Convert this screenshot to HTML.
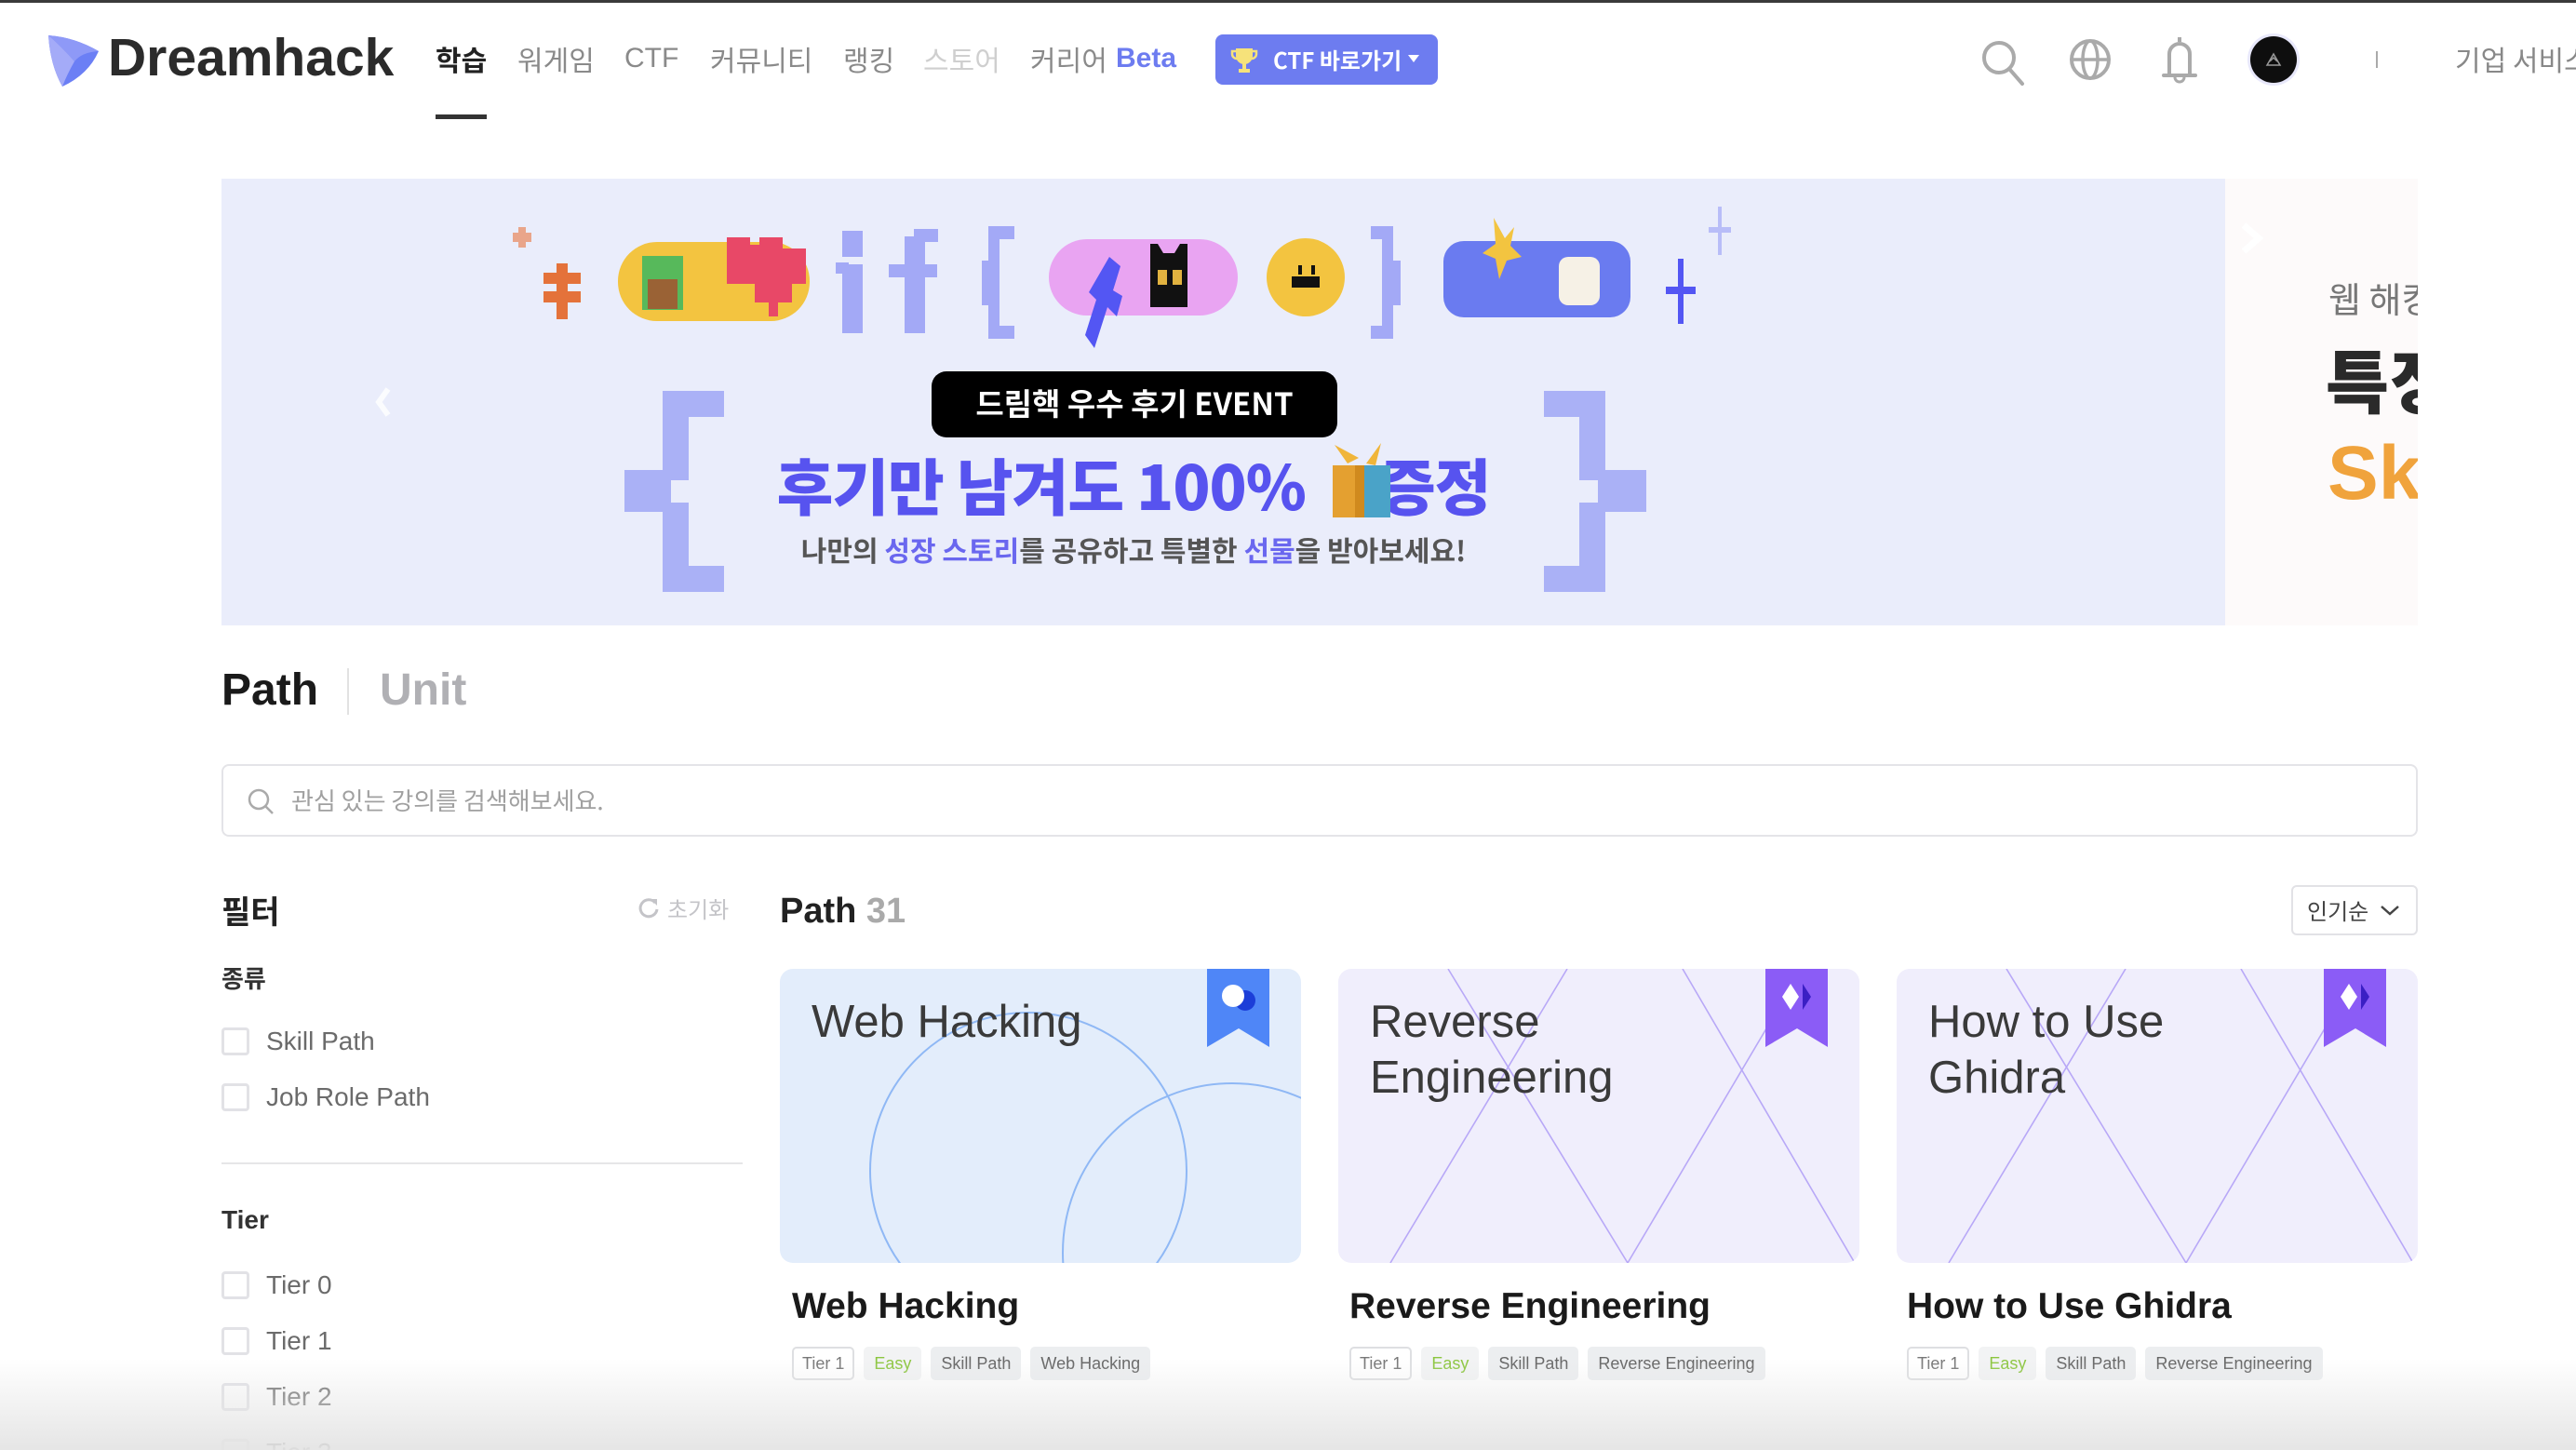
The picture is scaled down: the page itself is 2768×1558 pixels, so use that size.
<!DOCTYPE html>
<html><head><meta charset="utf-8">
<style>
*{margin:0;padding:0;box-sizing:border-box}
html,body{width:2768px;height:1558px;overflow:hidden;background:#fff}
body{position:relative;font-family:"Liberation Sans","Noto Sans CJK KR",sans-serif;color:#222}
.a{position:absolute;white-space:nowrap}
.kr{font-family:"Noto Sans CJK KR","Liberation Sans",sans-serif}
.nav{top:40px;font-size:30px;color:#8a8a8a;line-height:46px}
.cb{position:absolute;left:238px;width:30px;height:30px;border:3px solid #e2e2e6;border-radius:4px}
.cl{position:absolute;left:286px;font-size:28px;color:#6b6b6b;line-height:36px}
.card{position:absolute;top:1041px;width:560px;height:316px;border-radius:14px;overflow:hidden}
.ct{position:absolute;left:34px;top:27px;font-size:49px;color:#3a3a3a;line-height:60px}
.tt{position:absolute;top:1382px;font-size:39px;font-weight:bold;color:#1a1a1a}
.tags{position:absolute;top:1447px;display:flex;gap:10px}
.tag{height:36px;line-height:32px;padding:0 9px;font-size:18px;border-radius:5px;background:#eceef0;color:#666;border:2px solid #eceef0}
.tag.w{background:#fff;border-color:#dedfe2;color:#777}
.tag.g{background:#f2f3f4;border-color:#f2f3f4;color:#8cc63f}
</style></head><body>
<div class="a" style="left:0;top:0;width:2768px;height:3px;background:#3a3a3a"></div>

<svg class="a" style="left:44px;top:32px" width="72" height="66" viewBox="44 32 72 66">
<path d="M52 38 Q80 40 106 55 Q95 80 67 93 Q54 70 52 38Z" fill="#6b7ff5"/>
<path d="M52 38 Q80 40 106 55 Q88 56 80 66 Q66 50 52 38Z" fill="#8e99f7"/>
<path d="M52 38 Q66 50 80 66 Q72 80 67 93 Q54 70 52 38Z" fill="#a4abf8"/>
</svg>
<div class="a" style="left:116px;top:29px;font-size:57px;font-weight:bold;color:#2b2b2b;line-height:66px">Dreamhack</div>

<div class="a nav kr" style="left:468px;color:#222;font-weight:bold">학습</div>
<div class="a nav kr" style="left:556px">워게임</div>
<div class="a nav" style="left:671px">CTF</div>
<div class="a nav kr" style="left:763px">커뮤니티</div>
<div class="a nav kr" style="left:906px">랭킹</div>
<div class="a nav kr" style="left:992px;color:#cfcfcf">스토어</div>
<div class="a nav kr" style="left:1107px">커리어</div>
<div class="a nav" style="left:1199px;color:#6d7cf0;font-weight:bold">Beta</div>
<div class="a" style="left:468px;top:123px;width:55px;height:5px;background:#333"></div>

<div class="a kr" style="left:1306px;top:37px;width:239px;height:54px;border-radius:8px;background:#6d7cf0;color:#fff;font-size:24px;font-weight:bold;line-height:54px;padding-left:62px">CTF 바로가기</div>
<svg class="a" style="left:1322px;top:49px" width="30" height="32" viewBox="0 0 30 32"><path d="M6 3h18v8a9 9 0 0 1-18 0z" fill="#f6e27a"/><path d="M6 6H2v3a5 5 0 0 0 5 5M24 6h4v3a5 5 0 0 1-5 5" stroke="#f6e27a" stroke-width="2.5" fill="none"/><rect x="13" y="19" width="4" height="6" fill="#f6e27a"/><rect x="9" y="25" width="12" height="4" fill="#f6e27a"/></svg>
<svg class="a" style="left:1512px;top:58px" width="14" height="10"><path d="M1 1h12L7 9z" fill="#fff"/></svg>

<svg class="a" style="left:2120px;top:36px" width="360" height="60" viewBox="2120 36 360 60">
<circle cx="2148" cy="62" r="16" stroke="#aaa" stroke-width="4" fill="none"/><path d="M2159 74L2173 90" stroke="#aaa" stroke-width="4" stroke-linecap="round"/>
<circle cx="2246" cy="64" r="20" stroke="#aaa" stroke-width="4" fill="none"/><ellipse cx="2246" cy="64" rx="8" ry="20" stroke="#aaa" stroke-width="3.5" fill="none"/><path d="M2226 64h40" stroke="#aaa" stroke-width="3.5"/>
<path d="M2331 81V58a11 11 0 0 1 22 0v23M2325 81h34" stroke="#aaa" stroke-width="4" fill="none" stroke-linecap="round"/><path d="M2342 40v5" stroke="#aaa" stroke-width="4"/><path d="M2337 83a5 5 0 0 0 10 0" stroke="#aaa" stroke-width="3" fill="none"/>
<circle cx="2443" cy="64" r="28" fill="#e8e8fb"/><circle cx="2443" cy="64" r="25" fill="#0e0e0e"/>
<path d="M2436 70l7-12 7 12zM2439 66l4-4 4 4" stroke="#999" stroke-width="1.5" fill="none"/>
</svg>
<div class="a" style="left:2553px;top:55px;width:2px;height:18px;background:#aaa"></div>
<div class="a kr" style="left:2638px;top:42px;font-size:30px;color:#888;line-height:42px">기업 서비스</div>

<div class="a" style="left:238px;top:192px;width:2153px;height:480px;background:#eaedfb;overflow:hidden">
<svg class="a" style="left:0;top:0" width="2153" height="480" viewBox="238 192 2153 480">
<path d="M417 418l-10 14 10 14" stroke="#fff" stroke-width="6" fill="none" opacity=".8"/>
<g fill="#e9a58a"><rect x="557" y="244" width="8" height="22"/><rect x="551" y="250" width="20" height="10"/></g>
<g fill="#e4723a"><rect x="598" y="283" width="12" height="60"/><rect x="584" y="293" width="40" height="12"/><rect x="584" y="313" width="40" height="12"/></g>
<rect x="664" y="260" width="206" height="85" rx="42" fill="#f3c440"/>
<rect x="690" y="275" width="44" height="58" fill="#57b95b"/><rect x="696" y="300" width="32" height="32" fill="#9a6235"/>
<path d="M781 255h25v8h10v-8h25v12h25v38h-15v20h-15v15h-10v-15h-15v-20h-30z" fill="#e84867"/>
<g fill="#a3a9f6"><rect x="905" y="248" width="22" height="28"/><rect x="905" y="284" width="22" height="74"/><rect x="898" y="282" width="14" height="12"/>
<rect x="972" y="254" width="22" height="104"/><rect x="982" y="246" width="26" height="14"/><rect x="955" y="284" width="52" height="14"/>
<rect x="1062" y="243" width="12" height="121"/><rect x="1062" y="243" width="28" height="14"/><rect x="1062" y="350" width="28" height="14"/><rect x="1055" y="280" width="10" height="48"/>
<rect x="1485" y="243" width="12" height="121"/><rect x="1473" y="243" width="24" height="14"/><rect x="1473" y="350" width="24" height="14"/><rect x="1495" y="280" width="10" height="48"/></g>
<rect x="1127" y="257" width="203" height="82" rx="41" fill="#e9a4f2"/>
<path d="M1236 262h8l6 10h12l6-10h8v68h-40z" fill="#111"/><rect x="1244" y="290" width="10" height="16" fill="#e1b240"/><rect x="1260" y="290" width="10" height="16" fill="#e1b240"/>
<path d="M1192 276l12 10-8 26 10 6-6 22-10-10-14 44-10-14 12-38-8-8z" fill="#5356f3"/>
<ellipse cx="1403" cy="298" rx="42" ry="42" fill="#f3c440"/><rect x="1388" y="297" width="30" height="12" fill="#111"/><rect x="1395" y="285" width="4" height="10" fill="#111"/><rect x="1409" y="285" width="4" height="10" fill="#111"/>
<rect x="1551" y="259" width="201" height="82" rx="22" fill="#6a7bf0"/>
<path d="M1605 234l12 22 10-12-4 20 12 12-16 4-8 20-4-22-14-6 14-10z" fill="#f3c440"/>
<rect x="1675" y="276" width="44" height="52" rx="10" fill="#f6f1e6"/>
<g fill="#5356f3"><rect x="1803" y="278" width="6" height="70"/><rect x="1790" y="308" width="32" height="8"/></g>
<g fill="#b8bdf8"><rect x="1846" y="222" width="4" height="52"/><rect x="1836" y="244" width="24" height="6"/></g>
<g fill="#aab1f6"><rect x="712" y="420" width="66" height="28"/><rect x="712" y="420" width="28" height="96"/><rect x="671" y="505" width="50" height="45"/><rect x="712" y="540" width="28" height="96"/><rect x="712" y="608" width="66" height="28"/>
<rect x="1659" y="420" width="66" height="28"/><rect x="1697" y="420" width="28" height="96"/><rect x="1717" y="505" width="52" height="45"/><rect x="1697" y="540" width="28" height="96"/><rect x="1659" y="608" width="66" height="28"/></g>
<rect x="1001" y="399" width="436" height="71" rx="16" fill="#000"/>
<text x="1219" y="446" text-anchor="middle" font-family="Noto Sans CJK KR,sans-serif" font-weight="bold" font-size="33" fill="#fff">드림핵 우수 후기 EVENT</text>
<text x="1218" y="548" text-anchor="middle" font-family="Noto Sans CJK KR,sans-serif" font-weight="900" font-size="66" fill="#5753ef" letter-spacing="-1">후기만 남겨도 100% <tspan fill="#eaedfb">■</tspan>증정</text>
<g><rect x="1432" y="500" width="62" height="56" fill="#4aa3c8"/><rect x="1432" y="500" width="30" height="56" fill="#e4a030"/><rect x="1456" y="500" width="10" height="56" fill="#d08a1e"/><path d="M1448 498l-14-20 26 14zM1468 498l16-22-6 24z" fill="#f0b53a"/></g>
<text x="1218" y="603" text-anchor="middle" font-family="Noto Sans CJK KR,sans-serif" font-weight="bold" font-size="30" fill="#555">나만의 <tspan fill="#6a67ef">성장 스토리</tspan>를 공유하고 특별한 <tspan fill="#6a67ef">선물</tspan>을 받아보세요!</text>
</svg>
</div>
<div class="a" style="left:2391px;top:192px;width:207px;height:480px;background:#fdfafa;overflow:hidden">
<div class="a kr" style="left:111px;top:100px;font-size:38px;color:#777">웹 해킹</div>
<div class="a kr" style="left:108px;top:170px;font-size:74px;font-weight:900;color:#2a2a2a;line-height:90px">특징</div>
<div class="a" style="left:110px;top:272px;font-size:82px;font-weight:bold;color:#f0a33c;line-height:90px">Sk</div>
<svg class="a" style="left:14px;top:44px" width="30" height="40"><path d="M6 6l16 14-16 14" stroke="#fff" stroke-width="7" fill="none"/></svg>
</div>

<div class="a" style="left:238px;top:714px;font-size:48px;font-weight:bold;color:#1a1a1a">Path</div>
<div class="a" style="left:373px;top:718px;width:2px;height:50px;background:#e2e2e2"></div>
<div class="a" style="left:408px;top:714px;font-size:48px;font-weight:bold;color:#b0b0b4">Unit</div>

<div class="a" style="left:238px;top:821px;width:2360px;height:78px;border:2px solid #e4e4e8;border-radius:8px"></div>
<svg class="a" style="left:265px;top:846px" width="32" height="32"><circle cx="13" cy="13" r="10" stroke="#aaa" stroke-width="2.5" fill="none"/><path d="M20 20l8 8" stroke="#aaa" stroke-width="2.5"/></svg>
<div class="a kr" style="left:313px;top:840px;font-size:26px;color:#a0a0a0;line-height:40px">관심 있는 강의를 검색해보세요.</div>

<div class="a kr" style="left:238px;top:953px;font-size:34px;font-weight:bold;color:#222">필터</div>
<svg class="a" style="left:684px;top:963px" width="26" height="26"><path d="M20 7A9 9 0 1 0 22 14" stroke="#c4c4c8" stroke-width="3" fill="none"/><path d="M15 3h7v7z" fill="#c4c4c8"/></svg>
<div class="a kr" style="left:717px;top:958px;font-size:24px;color:#c4c4c8">초기화</div>
<div class="a kr" style="left:238px;top:1032px;font-size:26px;font-weight:bold;color:#333">종류</div>
<div class="cb" style="top:1104px"></div><div class="cl" style="top:1101px">Skill Path</div>
<div class="cb" style="top:1164px"></div><div class="cl" style="top:1161px">Job Role Path</div>
<div class="a" style="left:238px;top:1249px;width:560px;height:2px;background:#e6e6e8"></div>
<div class="a" style="left:238px;top:1295px;font-size:28px;font-weight:bold;color:#333">Tier</div>
<div class="cb" style="top:1366px"></div><div class="cl" style="top:1363px">Tier 0</div>
<div class="cb" style="top:1426px"></div><div class="cl" style="top:1423px">Tier 1</div>
<div class="cb" style="top:1486px"></div><div class="cl" style="top:1483px">Tier 2</div>
<div class="cb" style="top:1546px"></div><div class="cl" style="top:1543px">Tier 3</div>

<div class="a" style="left:838px;top:958px;font-size:38px;font-weight:bold;color:#222">Path <span style="color:#aaa">31</span></div>
<div class="a" style="left:2462px;top:951px;width:136px;height:54px;border:2px solid #e2e2e6;border-radius:6px"></div>
<div class="a kr" style="left:2479px;top:960px;font-size:24px;color:#444">인기순</div>
<svg class="a" style="left:2556px;top:970px" width="24" height="16"><path d="M3 4l9 8 9-8" stroke="#444" stroke-width="2.5" fill="none"/></svg>

<div class="card" style="left:838px;background:#e3edfb">
<svg class="a" width="560" height="316"><circle cx="267" cy="217" r="170" stroke="#8fb8f5" stroke-width="2" fill="none"/><circle cx="486" cy="305" r="182" stroke="#8fb8f5" stroke-width="2" fill="none"/>
<path d="M459 0h67v84l-33-20-34 20z" fill="#4f86f7"/><circle cx="500" cy="34" r="11" fill="#1c3ed8"/><circle cx="487" cy="29" r="12" fill="#fff"/></svg>
<div class="ct">Web Hacking</div></div>
<div class="card" style="left:1438px;background:#f0eefc">
<svg class="a" width="560" height="316"><g stroke="#b8a8f7" stroke-width="1.6"><path d="M118 0L311 316M246 0L56 316M370 0L555 316M498 0L311 316"/></g>
<path d="M459 0h67v84l-33-20-34 20z" fill="#8b5cf6"/><path d="M486 16l9 14-9 14-9-14z" fill="#fff"/><path d="M499 16l9 14-9 14z" fill="#3b1fc4"/></svg>
<div class="ct">Reverse<br>Engineering</div></div>
<div class="card" style="left:2038px;background:#f0eefc">
<svg class="a" width="560" height="316"><g stroke="#b8a8f7" stroke-width="1.6"><path d="M118 0L311 316M246 0L56 316M370 0L555 316M498 0L311 316"/></g>
<path d="M459 0h67v84l-33-20-34 20z" fill="#8b5cf6"/><path d="M486 16l9 14-9 14-9-14z" fill="#fff"/><path d="M499 16l9 14-9 14z" fill="#3b1fc4"/></svg>
<div class="ct">How to Use<br>Ghidra</div></div>

<div class="tt" style="left:851px">Web Hacking</div>
<div class="tt" style="left:1450px">Reverse Engineering</div>
<div class="tt" style="left:2049px">How to Use Ghidra</div>
<div class="tags" style="left:851px"><div class="tag w">Tier 1</div><div class="tag g">Easy</div><div class="tag">Skill Path</div><div class="tag">Web Hacking</div></div>
<div class="tags" style="left:1450px"><div class="tag w">Tier 1</div><div class="tag g">Easy</div><div class="tag">Skill Path</div><div class="tag">Reverse Engineering</div></div>
<div class="tags" style="left:2049px"><div class="tag w">Tier 1</div><div class="tag g">Easy</div><div class="tag">Skill Path</div><div class="tag">Reverse Engineering</div></div>

<div class="a" style="left:0;top:1460px;width:2768px;height:98px;background:linear-gradient(rgba(230,230,230,0),rgba(228,228,228,.95))"></div>
</body></html>
